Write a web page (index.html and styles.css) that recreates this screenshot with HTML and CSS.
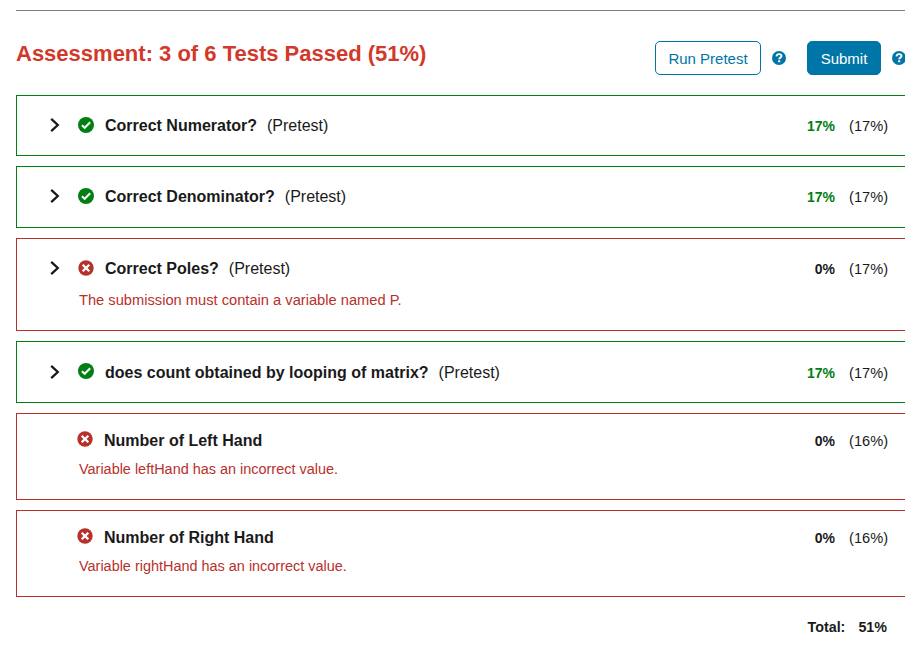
FILE: index.html
```html
<!DOCTYPE html>
<html lang="en">
<head>
    <meta charset="UTF-8">
    <title>Assessment</title>
    <link rel="stylesheet" href="styles.css">
</head>
<body>
    <svg class="sprite" width="0" height="0">
        <symbol id="arrow" viewBox="0 0 10 16">
            <path d="M1.2 1.8L7.8 8L1.2 14.2" fill="none" stroke="#1a1a1a" stroke-width="2.3"/>
        </symbol>
        <symbol id="check" viewBox="0 0 16 16">
            <circle cx="8" cy="8" r="8" fill="#008013"/>
            <path d="M3.9 8.2L6.7 10.8L12.2 5.2" fill="none" stroke="#fff" stroke-width="2"/>
        </symbol>
        <symbol id="cross" viewBox="0 0 16 16">
            <circle cx="8" cy="8" r="7.7" fill="#b7312c"/>
            <path d="M4.7 4.7L11.3 11.3M11.3 4.7L4.7 11.3" fill="none" stroke="#fff" stroke-width="2.3"/>
        </symbol>
        <symbol id="help" viewBox="0 0 14 14">
            <circle cx="7" cy="7" r="7" fill="#0076a8"/>
            <path d="M4.5 5.3C4.7 3.7 5.7 3.1 7 3.1C8.5 3.1 9.5 4 9.5 5.1C9.5 6.7 7.2 6.6 7.2 8.3" fill="none" stroke="#fff" stroke-width="1.9"/>
            <path d="M6.2 9.2h2v2h-2z" fill="#fff"/>
        </symbol>
    </svg>

    <div class="assessment">
        <div class="header">
            <h2>Assessment: 3 of 6 Tests Passed (51%)</h2>
            <div class="actions">
                <button class="btn">Run Pretest</button>
                <svg class="help"><use href="#help"/></svg>
                <button class="btn primary">Submit</button>
                <svg class="help"><use href="#help"/></svg>
            </div>
        </div>

        <ul class="tests">
            <li class="test pass">
                <div class="row">
                    <svg class="arrow"><use href="#arrow"/></svg>
                    <svg class="status"><use href="#check"/></svg>
                    <span class="name">Correct Numerator?</span>
                    <span class="type">(Pretest)</span>
                    <span class="score">17%</span>
                    <span class="weight">(17%)</span>
                </div>
            </li>
            <li class="test pass">
                <div class="row">
                    <svg class="arrow"><use href="#arrow"/></svg>
                    <svg class="status"><use href="#check"/></svg>
                    <span class="name">Correct Denominator?</span>
                    <span class="type">(Pretest)</span>
                    <span class="score">17%</span>
                    <span class="weight">(17%)</span>
                </div>
            </li>
            <li class="test fail">
                <div class="row">
                    <svg class="arrow"><use href="#arrow"/></svg>
                    <svg class="status"><use href="#cross"/></svg>
                    <span class="name">Correct Poles?</span>
                    <span class="type">(Pretest)</span>
                    <span class="score">0%</span>
                    <span class="weight">(17%)</span>
                </div>
                <p class="message">The submission must contain a variable named P.</p>
            </li>
            <li class="test pass">
                <div class="row">
                    <svg class="arrow"><use href="#arrow"/></svg>
                    <svg class="status"><use href="#check"/></svg>
                    <span class="name">does count obtained by looping of matrix?</span>
                    <span class="type">(Pretest)</span>
                    <span class="score">17%</span>
                    <span class="weight">(17%)</span>
                </div>
            </li>
            <li class="test fail plain">
                <div class="row">
                    <svg class="status"><use href="#cross"/></svg>
                    <span class="name">Number of Left Hand</span>
                    <span class="score">0%</span>
                    <span class="weight">(16%)</span>
                </div>
                <p class="message">Variable leftHand has an incorrect value.</p>
            </li>
            <li class="test fail plain">
                <div class="row">
                    <svg class="status"><use href="#cross"/></svg>
                    <span class="name">Number of Right Hand</span>
                    <span class="score">0%</span>
                    <span class="weight">(16%)</span>
                </div>
                <p class="message">Variable rightHand has an incorrect value.</p>
            </li>
        </ul>

        <div class="total">
            <span>Total:</span>
            <span>51%</span>
        </div>
    </div>
</body>
</html>
```

FILE: styles.css
```css
body, div, ul, li, h2, p {
    margin: 0;
    padding: 0;
}
ul {
    list-style: none;
}
* {
    box-sizing: border-box;
}
body {
    background-color: #ffffff;
    color: #1a1a1a;
    font-family: "Liberation Sans", Arial, sans-serif;
    font-size: 15px;
    overflow: hidden;
}
.sprite {
    display: block;
}
.assessment {
    width: 904px;
    margin: 10px 0 0 16px;
    border-top: 1px solid #808080;
}
.header {
    display: flex;
    justify-content: space-between;
    height: 84px;
    padding-top: 30px;
}
.header h2 {
    color: #d2392a;
    font-size: 22px;
    line-height: 26px;
}
.actions {
    display: flex;
    align-items: center;
    height: 34px;
    margin-right: 14px;
}
.btn {
    height: 34px;
    width: 106px;
    padding: 0;
    border: 1px solid #0076a8;
    border-radius: 5px;
    background-color: #ffffff;
    color: #0076a8;
    font-family: inherit;
    font-size: 15px;
}
.btn.primary {
    width: 74px;
    margin-left: 21px;
    background-color: #0076a8;
    color: #ffffff;
}
.help {
    width: 14px;
    height: 14px;
    margin-top: -1px;
    margin-left: 11px;
}
.test {
    height: 61.4px;
    margin-bottom: 10px;
    padding: 19.07px 31px 0 33px;
    border: 1px solid #008013;
}
.test.fail {
    height: 93.7px;
    padding-top: 19px;
    border-color: #b7312c;
}
.test.fail.plain {
    height: 87.1px;
    padding-top: 16px;
}
.row {
    display: flex;
    align-items: center;
    height: 22px;
    white-space: nowrap;
}
.arrow {
    width: 10px;
    height: 16px;
    margin-top: -2px;
    margin-right: 18px;
}
.status {
    width: 16px;
    height: 16px;
    margin-top: -2px;
    margin-right: 11px;
}
.pass .arrow {
    margin-top: -2px;
}
.pass .status {
    margin-top: -3px;
}
.plain .status {
    margin-top: -3px;
    margin-left: 27px;
}
.name {
    font-size: 16px;
    font-weight: bold;
}
.type {
    margin-left: 10px;
    font-size: 16px;
}
.score {
    margin-left: auto;
    font-size: 14px;
    font-weight: bold;
}
.pass .score {
    color: #008013;
}
.weight {
    margin-left: 14px;
    font-size: 14.6px;
}
.message {
    margin: 10px 0 0 29px;
    color: #b7312c;
    font-size: 14.68px;
    line-height: 20px;
}
.plain .message {
    margin-top: 7px;
    font-size: 14.44px;
}
.total {
    display: flex;
    justify-content: flex-end;
    gap: 13px;
    padding: 10px 33px 0 0;
    font-size: 14.3px;
    font-weight: bold;
    line-height: 20px;
}
```
